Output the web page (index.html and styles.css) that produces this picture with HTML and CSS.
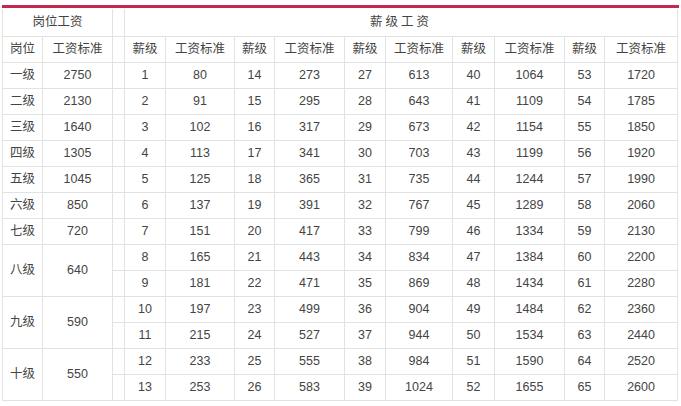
FILE: index.html
```html
<!DOCTYPE html>
<html lang="zh">
<head>
<meta charset="utf-8">
<link rel="stylesheet" href="styles.css">
</head>
<body>
<div class="wrap">
<div class="frame">
<table class="pay">
<colgroup>
<col style="width:40px"><col style="width:70px"><col style="width:12px">
<col style="width:41px"><col style="width:69px"><col style="width:40px"><col style="width:70px">
<col style="width:41px"><col style="width:67px"><col style="width:42px"><col style="width:70px">
<col style="width:40px"><col style="width:73px">
</colgroup>
<tr class="top"><td colspan="2">岗位工资</td><td class="gap"></td><td colspan="10" class="wide">薪级工资</td></tr>
<tr><td>岗位</td><td>工资标准</td><td class="gap"></td><td>薪级</td><td>工资标准</td><td>薪级</td><td>工资标准</td><td>薪级</td><td>工资标准</td><td>薪级</td><td>工资标准</td><td>薪级</td><td>工资标准</td></tr>
<tr><td>一级</td><td>2750</td><td class="gap"></td><td>1</td><td>80</td><td>14</td><td>273</td><td>27</td><td>613</td><td>40</td><td>1064</td><td>53</td><td>1720</td></tr>
<tr><td>二级</td><td>2130</td><td class="gap"></td><td>2</td><td>91</td><td>15</td><td>295</td><td>28</td><td>643</td><td>41</td><td>1109</td><td>54</td><td>1785</td></tr>
<tr><td>三级</td><td>1640</td><td class="gap"></td><td>3</td><td>102</td><td>16</td><td>317</td><td>29</td><td>673</td><td>42</td><td>1154</td><td>55</td><td>1850</td></tr>
<tr><td>四级</td><td>1305</td><td class="gap"></td><td>4</td><td>113</td><td>17</td><td>341</td><td>30</td><td>703</td><td>43</td><td>1199</td><td>56</td><td>1920</td></tr>
<tr><td>五级</td><td>1045</td><td class="gap"></td><td>5</td><td>125</td><td>18</td><td>365</td><td>31</td><td>735</td><td>44</td><td>1244</td><td>57</td><td>1990</td></tr>
<tr><td>六级</td><td>850</td><td class="gap"></td><td>6</td><td>137</td><td>19</td><td>391</td><td>32</td><td>767</td><td>45</td><td>1289</td><td>58</td><td>2060</td></tr>
<tr><td>七级</td><td>720</td><td class="gap"></td><td>7</td><td>151</td><td>20</td><td>417</td><td>33</td><td>799</td><td>46</td><td>1334</td><td>59</td><td>2130</td></tr>
<tr><td rowspan="2">八级</td><td rowspan="2">640</td><td class="gap"></td><td>8</td><td>165</td><td>21</td><td>443</td><td>34</td><td>834</td><td>47</td><td>1384</td><td>60</td><td>2200</td></tr>
<tr><td class="gap"></td><td>9</td><td>181</td><td>22</td><td>471</td><td>35</td><td>869</td><td>48</td><td>1434</td><td>61</td><td>2280</td></tr>
<tr><td rowspan="2">九级</td><td rowspan="2">590</td><td class="gap"></td><td>10</td><td>197</td><td>23</td><td>499</td><td>36</td><td>904</td><td>49</td><td>1484</td><td>62</td><td>2360</td></tr>
<tr><td class="gap"></td><td>11</td><td>215</td><td>24</td><td>527</td><td>37</td><td>944</td><td>50</td><td>1534</td><td>63</td><td>2440</td></tr>
<tr><td rowspan="2">十级</td><td rowspan="2">550</td><td class="gap"></td><td>12</td><td>233</td><td>25</td><td>555</td><td>38</td><td>984</td><td>51</td><td>1590</td><td>64</td><td>2520</td></tr>
<tr><td class="gap"></td><td>13</td><td>253</td><td>26</td><td>583</td><td>39</td><td>1024</td><td>52</td><td>1655</td><td>65</td><td>2600</td></tr>
</table>
</div>
</div>
</body>
</html>
```

FILE: styles.css
```css
html, body {
  margin: 0;
  padding: 0;
  background: #fff;
}
.wrap {
  padding: 5px 0 0 2px;
}
.frame {
  width: 677px;
  padding-top: 1px;
  border-top: 3px solid #c5284e;
}
.pay {
  border-collapse: collapse;
  table-layout: fixed;
  width: 676px;
  font-family: "Liberation Sans", "Noto Sans CJK SC", sans-serif;
  font-size: 12.5px;
  color: #444;
}
.pay td {
  border: 1px solid #e2e2e2;
  height: 25px;
  padding: 0;
  text-align: center;
  vertical-align: middle;
  line-height: 1;
}
.pay tr.top td {
  border-top: none;
  height: 27px;
}
.pay td.wide {
  letter-spacing: 3px;
}
```
